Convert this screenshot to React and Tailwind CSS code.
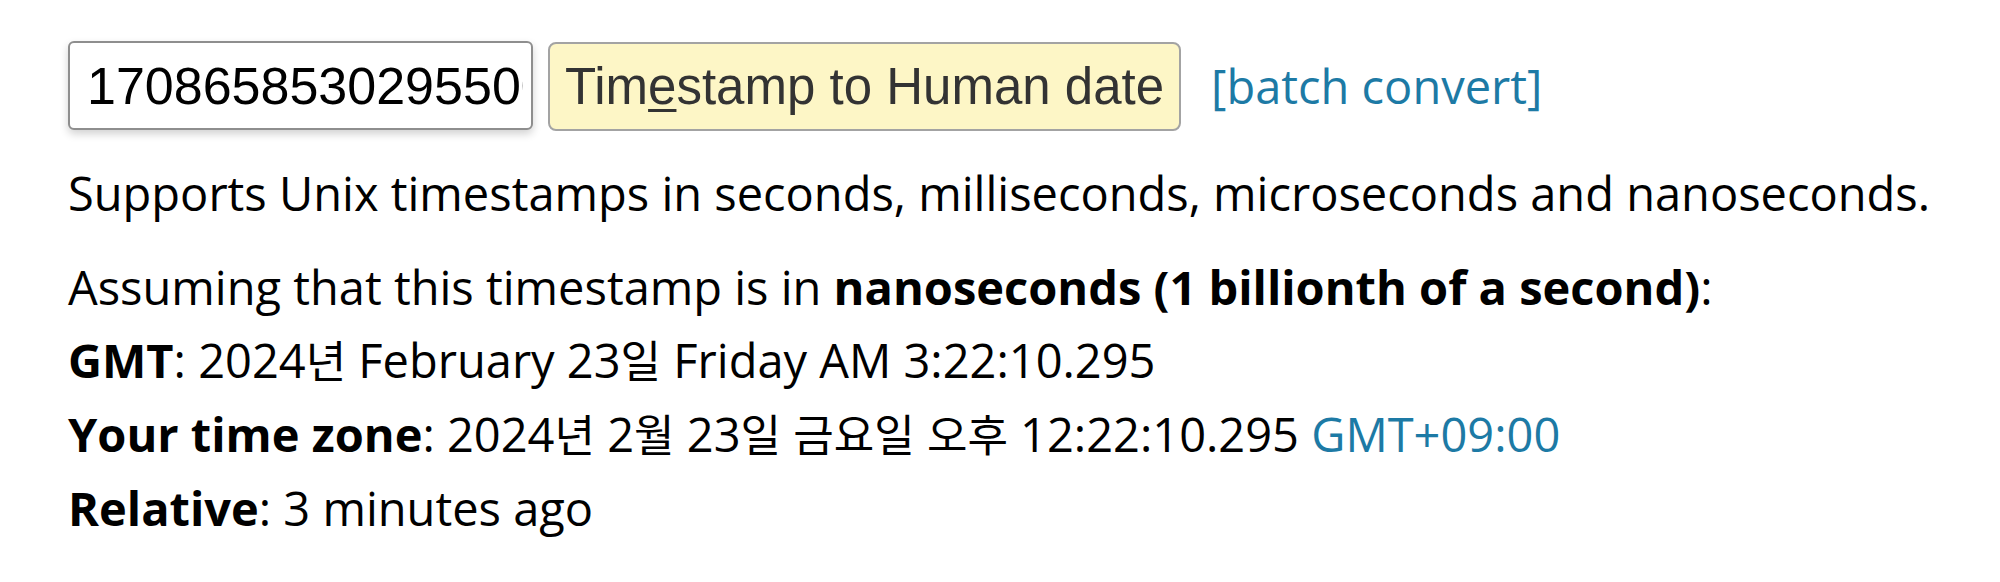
function Ko({ children }) {
  return <span className="text-[44px]">{children}</span>;
}

export default function App() {
  return (
    <div className="min-h-[582px] bg-white pl-[68px] pt-[41px] text-black" style={{ fontFamily: '"Open Sans", "Noto Sans CJK KR", sans-serif' }}>
      <div className="flex items-baseline">
        <input
          type="text"
          defaultValue="1708658530295500000"
          className="h-[89px] w-[465px] rounded-[6px] border-2 border-[#8e8e8e] bg-white pl-[17px] pr-[8px] text-[52px] text-black shadow-[0_4px_8px_rgba(0,0,0,0.18)] outline-none"
          style={{ fontFamily: '"Liberation Sans", Arial, sans-serif' }}
        />
        <button
          className="ml-[15px] h-[89px] rounded-[8px] border-2 border-[#a3a3a3] bg-[#fdf6c6] px-[15px] text-[51px] text-[#333]"
          style={{ fontFamily: '"Liberation Sans", Arial, sans-serif' }}
        >
          Tim<u className="decoration-[3px] underline-offset-[5px]">e</u>stamp to Human date
        </button>
        <a href="#" className="ml-[30px] text-[47px] text-[#1d7aa5]">[batch convert]</a>
      </div>
      <p className="mt-[26px] text-[47px] leading-[73px]">
        Supports Unix timestamps in seconds, milliseconds, microseconds and nanoseconds.
      </p>
      <div className="mt-[21px] text-[47px] leading-[73px]">
        <div>
          Assuming that this timestamp is in <b>nanoseconds (1 billionth of a second)</b>:
        </div>
        <div>
          <b>GMT</b>: 2024<Ko>년</Ko> February 23<Ko>일</Ko> Friday AM 3:22:10.295
        </div>
        <div>
          <b>Your time zone</b>: 2024<Ko>년</Ko> 2<Ko>월</Ko> 23<Ko>일</Ko> <Ko>금요일</Ko> <Ko>오후</Ko> 12:22:10.295{' '}
          <span className="text-[#1d7aa5]">GMT+09:00</span>
        </div>
        <div>
          <b>Relative</b>: 3 minutes ago
        </div>
      </div>
    </div>
  );
}
